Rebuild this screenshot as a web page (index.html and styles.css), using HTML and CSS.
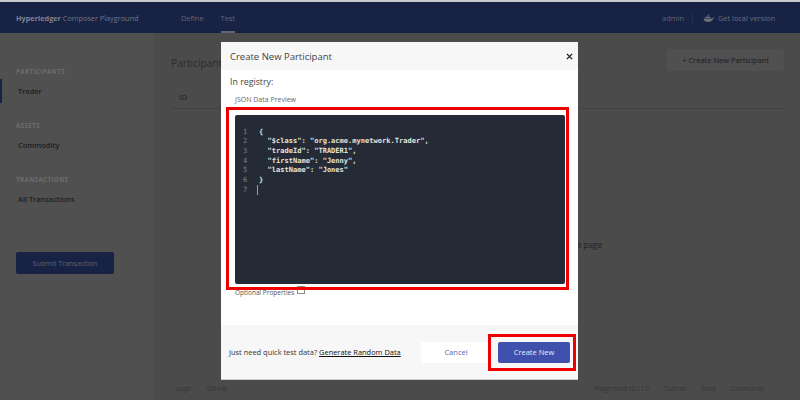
FILE: index.html
```html
<!DOCTYPE html>
<html lang="en">
<head>
<meta charset="utf-8">
<title>Hyperledger Composer Playground</title>
<link rel="stylesheet" href="styles.css">
</head>
<body>
<div class="app">
  <header class="topbar">
    <div class="brand"><b>Hyperledger</b> Composer Playground</div>
    <nav class="tabs">
      <span class="tab">Define</span>
      <span class="tab tab-active">Test</span>
    </nav>
    <div class="top-right">
      <span class="admin">admin</span>
      <span class="divider"></span>
      <svg class="docker" viewBox="0 0 24 16" width="12" height="9"><path fill="#6a6e7c" d="M1 8h17c1 0 2-1 2.300-2 1 .5 2.200.4 3.200 0-.5 1-1.500 1.700-2.700 1.900C19.500 12 16 15 10 15 5 15 1.500 13 1 8z"/><path fill="#6a6e7c" d="M4 5h2.500v2H4zM7 5h2.500v2H7zM10 5h2.500v2H10zM13 5h2.500v2H13zM7 2.500h2.500v2H7zM10 2.500h2.500v2H10zM10 0h2.500v2H10z"/></svg>
      <span>Get local version</span>
    </div>
  </header>
  <div class="body">
    <aside class="sidebar">
      <h4 class="side-title">PARTICIPANTS</h4>
      <div class="side-item side-active">Trader</div>
      <h4 class="side-title">ASSETS</h4>
      <div class="side-item">Commodity</div>
      <h4 class="side-title">TRANSACTIONS</h4>
      <div class="side-item">All Transactions</div>
      <button class="submit">Submit Transaction</button>
    </aside>
    <main class="main">
      <div class="main-head">
        <h2 class="registry">Participant</h2>
        <button class="create-btn">+ Create New Participant</button>
      </div>
      <div class="table-head">ID</div>
      <div class="empty">This registry is empty. Create a new participant on this page</div>
      <footer class="footer">
        <div class="foot-left"><span>Legal</span><span>GitHub</span></div>
        <div class="foot-right"><span>Playground v0.11.0</span><span>Tutorial</span><span>Docs</span><span>Community</span></div>
      </footer>
    </main>
  </div>
</div>

<div class="modal">
  <div class="modal-head">
    <span>Create New Participant</span>
    <svg class="close" viewBox="0 0 8 8" width="7" height="7"><path d="M1 1l6 6M7 1L1 7" stroke="#222" stroke-width="1.600" fill="none"/></svg>
  </div>
  <div class="modal-body">
    <div class="in-reg">In registry:</div>
    <div class="json-label">JSON Data Preview</div>
    <div class="code">
      <div class="gutter">1<br>2<br>3<br>4<br>5<br>6<br>7</div>
<pre class="source">{
  "$class": "org.acme.mynetwork.Trader",
  "tradeId": "TRADER1",
  "firstName": "Jenny",
  "lastName": "Jones"
}
<span class="caret"></span></pre>
    </div>
    <div class="optional"><span>Optional Properties</span><span class="check"></span></div>
  </div>
  <div class="modal-foot">
    <span class="quick">Just need quick test data? <u>Generate Random Data</u></span>
    <button class="cancel">Cancel</button>
    <button class="primary">Create New</button>
  </div>
  <div class="mark mark-code"></div>
  <div class="mark mark-btn"></div>
</div>
</body>
</html>
```
FILE: styles.css
```css
* { box-sizing: border-box; }
html, body { margin: 0; height: 100%; overflow: hidden; }
body { font-family: "Open Sans", "Noto Sans", sans-serif; background: #4b4b4b; position: relative; }
.app { display: flex; flex-direction: column; height: 400px; border-top: 2px solid #c9c9c9; }
.topbar { height: 31px; padding-top: 1px; background: #182245; display: flex; align-items: center; color: #6a6e7c; font-size: 7.400px; flex: none; }
.brand { width: 154px; padding-left: 16px; background: #182245; font-size: 7.300px; white-space: nowrap; color: #737683; }
.brand b { color: #80838f; font-weight: 700; }
.tabs { display: flex; align-self: stretch; gap: 17px; padding-left: 27px; }
.tab { display: flex; align-items: center; color: #626778; height: 100%; }
.tab-active { border-bottom: 2px solid #62646f; padding-top: 2px; }
.top-right { margin-left: auto; display: flex; align-items: center; padding-right: 25px; }
.admin { color: #5f6474; }
.divider { width: 1px; height: 14px; background: #232c4d; margin: 0 10px 0 8px; }
.docker { margin-right: 3px; }
.body { flex: 1; display: flex; min-height: 0; }
.sidebar { width: 154px; background: #505050; padding-top: 34px; flex: none; }
.side-title { margin: 0; padding-left: 16px; font-size: 6.200px; font-weight: 700; letter-spacing: .4px; color: #6d6d6d; line-height: 9px; }
.side-item { margin: 3px 0 18px; height: 24px; padding-left: 18px; display: flex; align-items: center; font-size: 7.400px; font-weight: 600; color: #1e1e1e; }
.side-active { box-shadow: inset 2px 0 #182245; }
.submit { display: block; margin: 41px 0 0 16px; width: 98px; height: 22px; background: #182245; border: 0; border-radius: 2px; font: 7.200px "Open Sans", sans-serif; color: #5d6274; }
.main { flex: 1; padding: 0 16px 0 17px; display: flex; flex-direction: column; min-width: 0; }
.main-head { display: flex; align-items: center; justify-content: space-between; height: 22px; margin-top: 16px; }
.registry { margin: 5px 0 0; font-size: 10.200px; font-weight: 400; color: #2c2c2c; white-space: nowrap; }
.create-btn { width: 117px; height: 22px; background: #505050; border: 0; border-radius: 2px; font: 7.500px "Open Sans", sans-serif; color: #1c1c1c; padding: 0; }
.table-head { margin-top: 16px; height: 22px; padding-left: 8px; border-bottom: 1px solid #424242; font-size: 8px; line-height: 20px; color: #222; }
.empty { margin-top: 130px; padding-left: 22px; text-align: center; font-size: 8.200px; color: #222; white-space: nowrap; }
.footer { margin-top: auto; height: 25px; margin-right: 20px; margin-left: 5px; border-top: 1px solid #494949; display: flex; justify-content: space-between; align-items: center; font-size: 6.200px; color: #353535; }
.foot-left, .foot-right { display: flex; gap: 15px; }
.modal { position: absolute; left: 221px; top: 42px; width: 357px; height: 338px; background: #fff; border-radius: 2px; display: flex; flex-direction: column; }
.modal-head { height: 28px; background: #f7f7f7; display: flex; align-items: center; justify-content: space-between; padding: 0 5px 0 9px; font-size: 9.500px; color: #444; flex: none; }
.modal-body { flex: 1; padding: 0 13px 0 14px; position: relative; }
.in-reg { margin: 5px 0 0 -5px; font-size: 8.800px; color: #444; line-height: 15px; }
.json-label { margin: 5px 0 0 0; font-size: 7px; color: #666; line-height: 10px; }
.code { margin-top: 10px; height: 169px; background: #252a37; border-radius: 2px; display: flex; padding-top: 11.500px; font: 700 7.050px/9.700px "DejaVu Sans Mono", "Liberation Mono", monospace; color: #e4e3da; }
.gutter { width: 22px; text-align: left; padding-left: 8px; color: #7a7f8c; font-weight: 400; flex: none; }
.source { margin: 0; padding-left: 2px; font: inherit; }
.caret { display: inline-block; width: 1px; height: 10px; margin-left: -2px; background: #9aa0ac; vertical-align: top; }
.optional { display: flex; align-items: flex-start; gap: 3px; font-size: 6.500px; color: #555; margin-top: 2px; line-height: 13px; }
.check { width: 8px; height: 8px; border: 1px solid #8a8a8a; background: #fff; }
.modal-foot { height: 55px; background: #f7f7f7; display: flex; align-items: center; padding: 0 8px 0 8px; flex: none; border-bottom: 1px solid #cfcfcf; }
.quick { font-size: 7.450px; color: #333; white-space: nowrap; width: 192px; }
.quick u { color: #111; }
.cancel { width: 70px; height: 21px; background: #fff; border: 0; border-radius: 2px; font: 7.500px "Open Sans", sans-serif; color: #5c66b5; padding: 0; margin-right: 7px; }
.primary { width: 72px; height: 21px; background: #3f51ad; border: 0; border-radius: 2px; font: 7.500px "Open Sans", sans-serif; color: #e6e8f4; padding: 0; }
.mark { position: absolute; border: 3px solid #ee0000; pointer-events: none; }
.mark-code { left: 5px; top: 65px; width: 343px; height: 183px; }
.mark-btn { left: 267px; top: 292px; width: 88px; height: 37px; }
```
